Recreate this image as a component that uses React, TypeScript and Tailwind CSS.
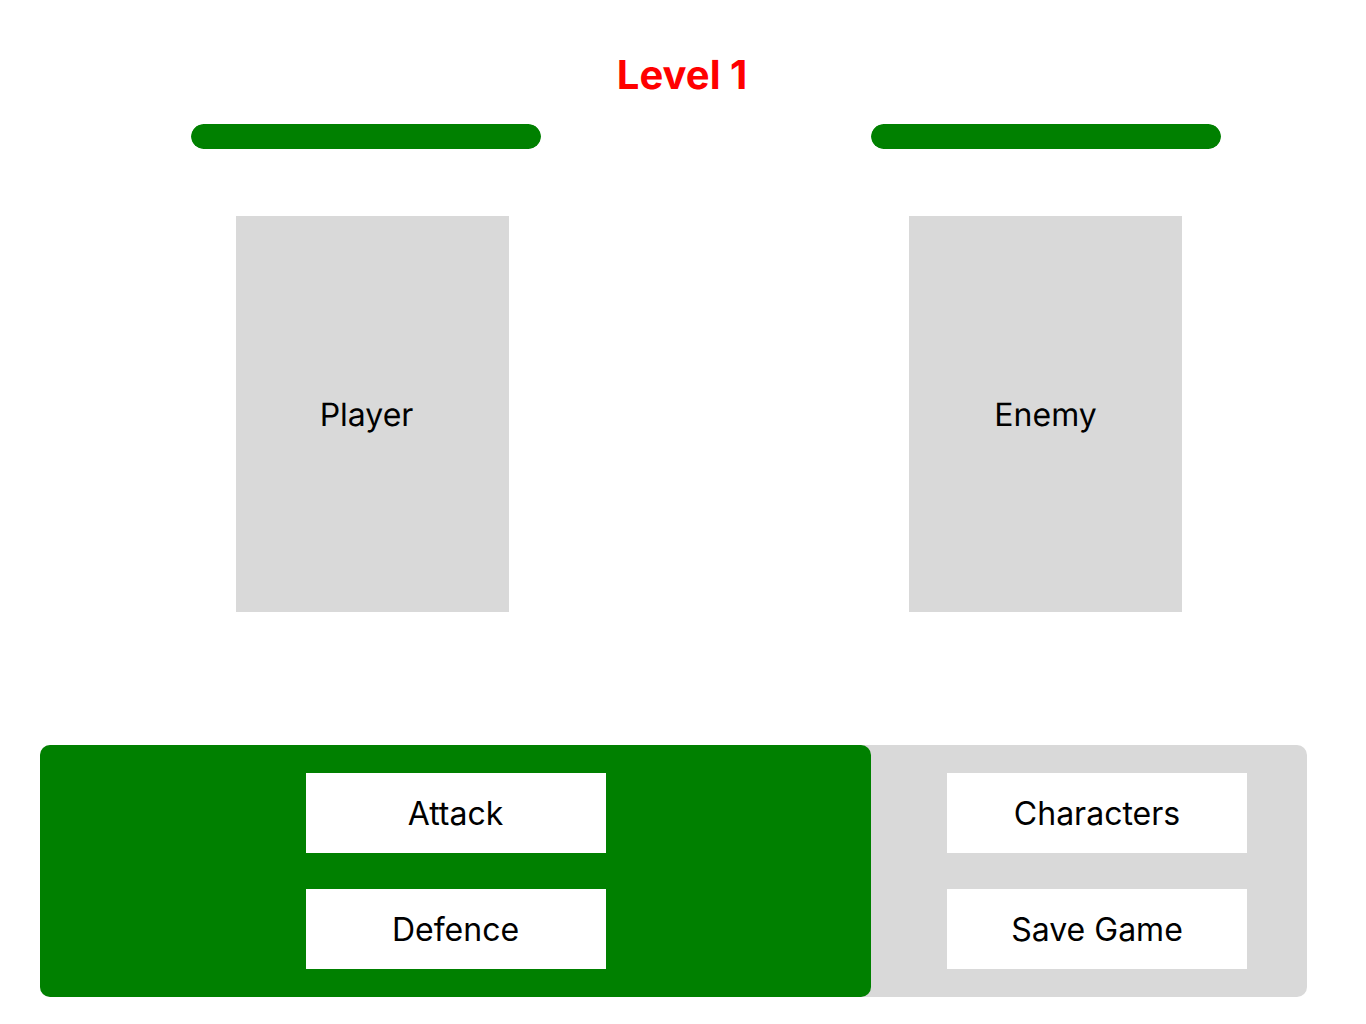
const fighters = [
  { name: 'Player', health: 100 },
  { name: 'Enemy', health: 100 },
];

function ActionButton({ label }: { label: string }) {
  return (
    <button type="button" className="h-20 w-[300px] bg-white text-center">
      {label}
    </button>
  );
}

function HealthBar({ name, value }: { name: string; value: number }) {
  return (
    <div
      role="progressbar"
      aria-label={`${name} health`}
      aria-valuenow={value}
      aria-valuemin={0}
      aria-valuemax={100}
      className="h-[25px] w-[350px] overflow-hidden rounded-full"
    >
      <div className="h-full rounded-full bg-[#008000]" style={{ width: `${value}%` }} />
    </div>
  );
}

export default function App() {
  return (
    <div className="min-h-screen bg-white pt-[51px] pb-[27px] font-['Inter',sans-serif] text-[32px] leading-[39px] text-black antialiased [font-variant-ligatures:no-common-ligatures] [text-rendering:geometricPrecision]">
      <h1 className="pr-0.5 text-center text-[40px] leading-[48px] font-bold text-[#ff0000]">Level 1</h1>

      <main>
        <div className="mt-[25px] flex justify-between pr-[145px] pl-[191px]">
          {fighters.map((f) => (
            <HealthBar key={f.name} name={f.name} value={f.health} />
          ))}
        </div>

        <div className="mt-[67px] flex justify-between pr-[184px] pl-[236px]">
          <section className="flex h-[396px] w-[273px] items-center justify-center bg-[#d9d9d9] pr-3">
            <h2>Player</h2>
          </section>
          <section className="flex h-[396px] w-[273px] items-center justify-center bg-[#d9d9d9]">
            <h2>Enemy</h2>
          </section>
        </div>

        <div className="mt-[133px] mr-[59px] ml-10 flex rounded-[10px] bg-[#d9d9d9]">
          <div className="flex grow flex-col items-center gap-9 rounded-[10px] bg-[#008000] py-7">
            <ActionButton label="Attack" />
            <ActionButton label="Defence" />
          </div>
          <div className="flex flex-col gap-9 py-7 pr-[60px] pl-[76px]">
            <ActionButton label="Characters" />
            <ActionButton label="Save Game" />
          </div>
        </div>
      </main>
    </div>
  );
}
